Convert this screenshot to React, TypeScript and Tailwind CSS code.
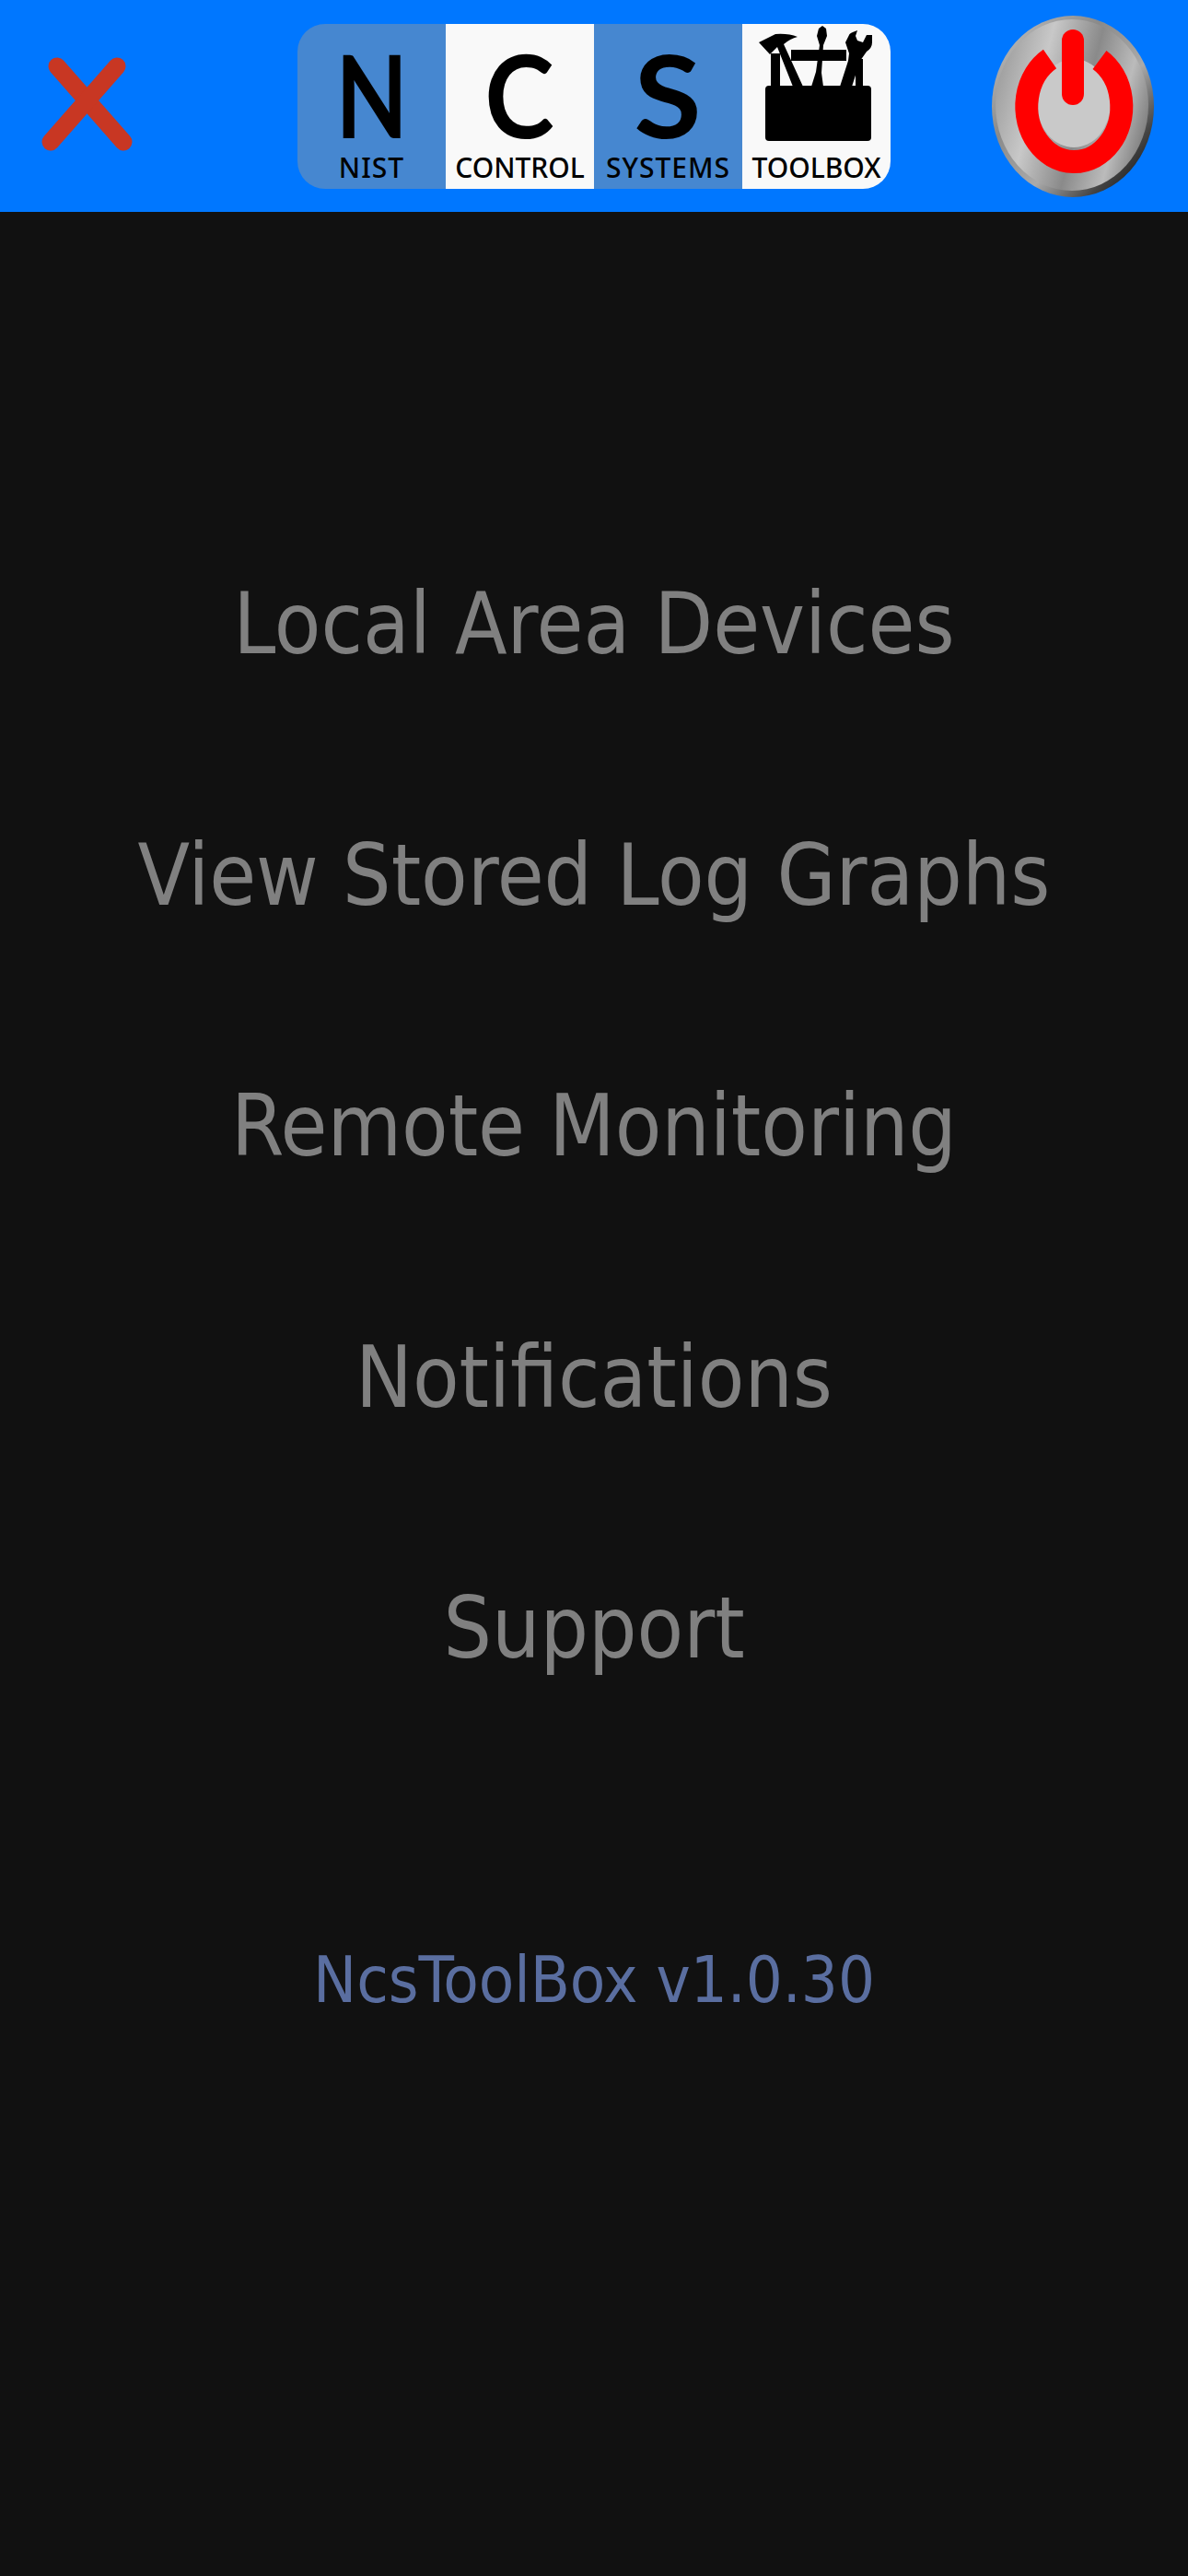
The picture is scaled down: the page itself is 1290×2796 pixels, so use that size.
const menu = ['Local Area Devices', 'View Stored Log Graphs', 'Remote Monitoring', 'Notifications', 'Support']

function LogoTile({ letter, label, light, rounded, letterClass, labelClass }: { letter: string; label: string; light?: boolean; rounded?: string; letterClass?: string; labelClass?: string }) {
  return (
    <div className={`w-[161px] h-[179px] flex flex-col items-center ${light ? 'bg-[#f9f9f9]' : 'bg-[#4687d0]'} ${rounded ?? ''}`}>
      <div className={`h-[136px] pt-[16px] flex items-center justify-center text-[124px] leading-[90px] font-bold text-black font-['Lato',sans-serif] ${letterClass ?? ''}`}>{letter}</div>
      <div className={`pt-[5px] text-[30px] leading-[30px] font-medium text-black font-['Noto_Sans',sans-serif] whitespace-nowrap ${labelClass ?? ''}`}>{label}</div>
    </div>
  )
}

function ToolboxIcon() {
  return (
    <svg width="161" height="136" viewBox="0 0 161 136" className="fill-black block">
      <rect x="25" y="67" width="115" height="60" rx="4" />
      <rect x="31" y="32" width="10" height="36" />
      <rect x="123" y="38" width="8" height="30" />
      <rect x="53" y="28" width="60" height="12" />
      <path d="M18 20 L30 33 L38 25 L55 68 L66 68 L45 22 Q52 16 60 14 Q50 10 36 11 Z" />
      <path d="M87 2 L83 5 L81 13 L84 23 L80 52 L75 68 L88 68 L86 53 L88 23 L92 13 L91 5 Z" />
      <path d="M106 68 L119 68 L128 40 L135 30 Q141 26 141 20 L141 12 L135 12 L131 20 L125 18 L123 13 L125 7 Q116 10 116 12 L112 20 L116 32 L115 40 Z" />
    </svg>
  )
}

function PowerButton() {
  return (
    <svg width="176" height="197" viewBox="0 0 176 197" className="block">
      <defs>
        <linearGradient id="rim" x1="0" y1="0" x2="1" y2="1">
          <stop offset="0" stopColor="#c8c8c8" />
          <stop offset="0.35" stopColor="#8a8a8a" />
          <stop offset="0.6" stopColor="#aaaaaa" />
          <stop offset="0.8" stopColor="#444444" />
          <stop offset="1" stopColor="#000000" />
        </linearGradient>
        <linearGradient id="face" x1="0" y1="0.3" x2="1" y2="0.6">
          <stop offset="0" stopColor="#9c9c9c" />
          <stop offset="0.28" stopColor="#c8c8c8" />
          <stop offset="0.58" stopColor="#8a8a8a" />
          <stop offset="0.82" stopColor="#bbbbbb" />
          <stop offset="1" stopColor="#808080" />
        </linearGradient>
      </defs>
      <ellipse cx="88" cy="98.5" rx="88" ry="98.5" fill="url(#rim)" />
      <ellipse cx="87" cy="97" rx="83" ry="93" fill="url(#face)" />
      <ellipse cx="89" cy="95" rx="40" ry="48" fill="#c9c9c9" />
      <path d="M63 47 A51.5 60 0 1 0 117 48" fill="none" stroke="#ff0000" strokeWidth="25" />
      <line x1="88" y1="27" x2="88" y2="85" stroke="#ff0000" strokeWidth="24" strokeLinecap="round" />
    </svg>
  )
}

export default function App() {
  return (
    <div className="min-h-[2796px] bg-[#111111] font-['DejaVu_Sans_Condensed','DejaVu_Sans',sans-serif]">
      <header className="h-[230px] bg-[#0077ff] grid grid-cols-[1fr_auto_1fr] items-center">
        <div className="pl-[45px]">
          <svg width="100" height="106" viewBox="0 0 100 106" className="block">
            <g stroke="#c83723" strokeWidth="19" strokeLinecap="round">
              <line x1="17" y1="10" x2="89" y2="92" />
              <line x1="82" y1="10" x2="10" y2="92" />
            </g>
          </svg>
        </div>
        <div className="flex items-start">
          <LogoTile letter="N" label="NIST" rounded="rounded-l-[30px]" letterClass="scale-x-[0.82]" labelClass="tracking-[1px]" />
          <LogoTile letter="C" label="CONTROL" light letterClass="scale-x-[0.92]" />
          <LogoTile letter="S" label="SYSTEMS" letterClass="scale-x-[1.08]" labelClass="tracking-[1px]" />
          <div className="w-[161px] h-[179px] flex flex-col items-center bg-[#f9f9f9] rounded-r-[30px]">
            <ToolboxIcon />
            <div className="pt-[5px] text-[30px] leading-[30px] font-medium text-black font-['Noto_Sans',sans-serif]">TOOLBOX</div>
          </div>
        </div>
        <div className="flex justify-end pr-[37px]">
          <PowerButton />
        </div>
      </header>
      <main className="flex flex-col items-center pt-[312px]">
        {menu.map((item) => (
          <div key={item} className="h-[272.5px] text-[92px] leading-[272.5px] text-[#808080] whitespace-nowrap">
            {item}
          </div>
        ))}
        <div className="mt-[204px] text-[70px] leading-[80px] text-[#5a6ea0] whitespace-nowrap">NcsToolBox v1.0.30</div>
      </main>
    </div>
  )
}
